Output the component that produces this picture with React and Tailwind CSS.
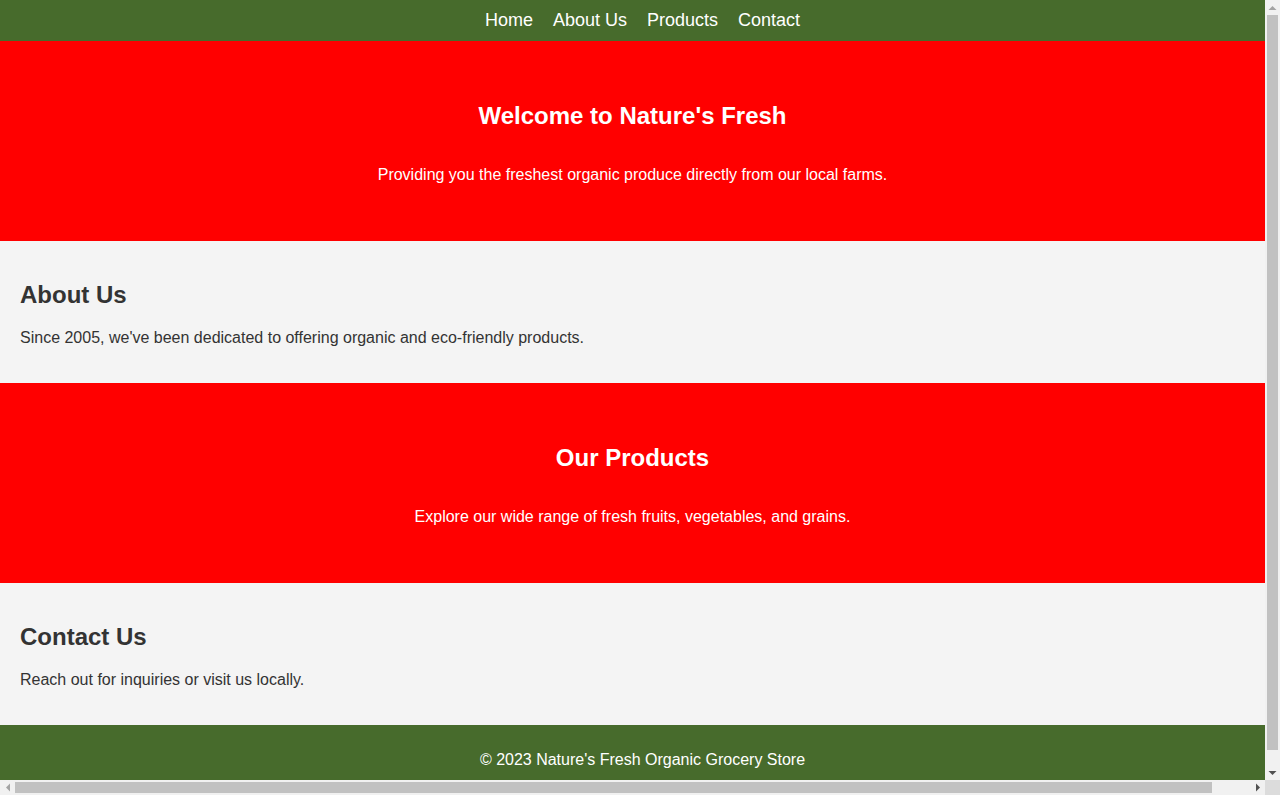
function Tri({ dir, color }) {
  const pts = {
    up: "3.5,5 7.5,1 11.5,5",
    down: "3.5,1 7.5,5 11.5,1",
    left: "1,3.5 5,7.5 1,11.5",
    right: "1,3.5 5,7.5 1,11.5",
  };
  if (dir === "up" || dir === "down") {
    return (
      <svg width="15" height="6" viewBox="0 0 15 6">
        <polygon points={pts[dir]} fill={color} />
      </svg>
    );
  }
  return (
    <svg width="6" height="15" viewBox="0 0 6 15">
      <polygon points={dir === "left" ? "5,3.5 1,7.5 5,11.5" : "1,3.5 5,7.5 1,11.5"} fill={color} />
    </svg>
  );
}

export default function App() {
  return (
    <div className="w-[1280px] h-[795px] grid grid-cols-[1265px_15px] grid-rows-[780px_15px] overflow-hidden bg-[#f1f1f1]">
      <div className="overflow-hidden font-['Liberation_Sans',Arial,sans-serif] leading-[normal] text-[#333] bg-[#f4f4f4]">
        <nav className="box-content w-full p-[10px] bg-[#476b2c] flex justify-center gap-5 text-[18px] text-white">
          <a href="#home">Home</a>
          <a href="#about">About Us</a>
          <a href="#products">Products</a>
          <a href="#contact">Contact</a>
        </nav>
        <section className="h-[200px] flex flex-col justify-center items-center bg-[#ff0000] text-white text-center">
          <h2 className="text-[24px] font-bold my-[0.83em]">Welcome to Nature's Fresh</h2>
          <p className="text-[16px] my-4">Providing you the freshest organic produce directly from our local farms.</p>
        </section>
        <section className="box-content w-full p-5 bg-[#f4f4f4]">
          <h2 className="text-[24px] font-bold my-[0.83em]">About Us</h2>
          <p className="text-[16px] my-4">Since 2005, we've been dedicated to offering organic and eco-friendly products.</p>
        </section>
        <section className="h-[200px] flex flex-col justify-center items-center bg-[#ff0000] text-white text-center">
          <h2 className="text-[24px] font-bold my-[0.83em]">Our Products</h2>
          <p className="text-[16px] my-4">Explore our wide range of fresh fruits, vegetables, and grains.</p>
        </section>
        <section className="box-content w-full p-5 bg-[#f4f4f4]">
          <h2 className="text-[24px] font-bold my-[0.83em]">Contact Us</h2>
          <p className="text-[16px] my-4">Reach out for inquiries or visit us locally.</p>
        </section>
        <footer className="box-content w-full p-[10px] bg-[#476b2c] text-white text-center">
          <p className="text-[16px] my-4">© 2023 Nature's Fresh Organic Grocery Store</p>
        </footer>
      </div>

      {/* vertical scrollbar */}
      <div className="flex flex-col bg-[#f1f1f1]">
        <div className="h-[15px] flex items-center justify-center">
          <Tri dir="up" color="#a3a3a3" />
        </div>
        <div className="h-[735px] mx-[2px] bg-[#c1c1c1]" />
        <div className="flex-1" />
        <div className="h-[15px] flex items-center justify-center">
          <Tri dir="down" color="#505050" />
        </div>
      </div>

      {/* horizontal scrollbar */}
      <div className="flex bg-[#f1f1f1]">
        <div className="w-[15px] flex items-center justify-center">
          <Tri dir="left" color="#a3a3a3" />
        </div>
        <div className="w-[1197px] my-[2px] bg-[#c1c1c1]" />
        <div className="flex-1" />
        <div className="w-[15px] flex items-center justify-center">
          <Tri dir="right" color="#505050" />
        </div>
      </div>

      {/* corner */}
      <div className="bg-[#dcdcdc]" />
    </div>
  );
}
